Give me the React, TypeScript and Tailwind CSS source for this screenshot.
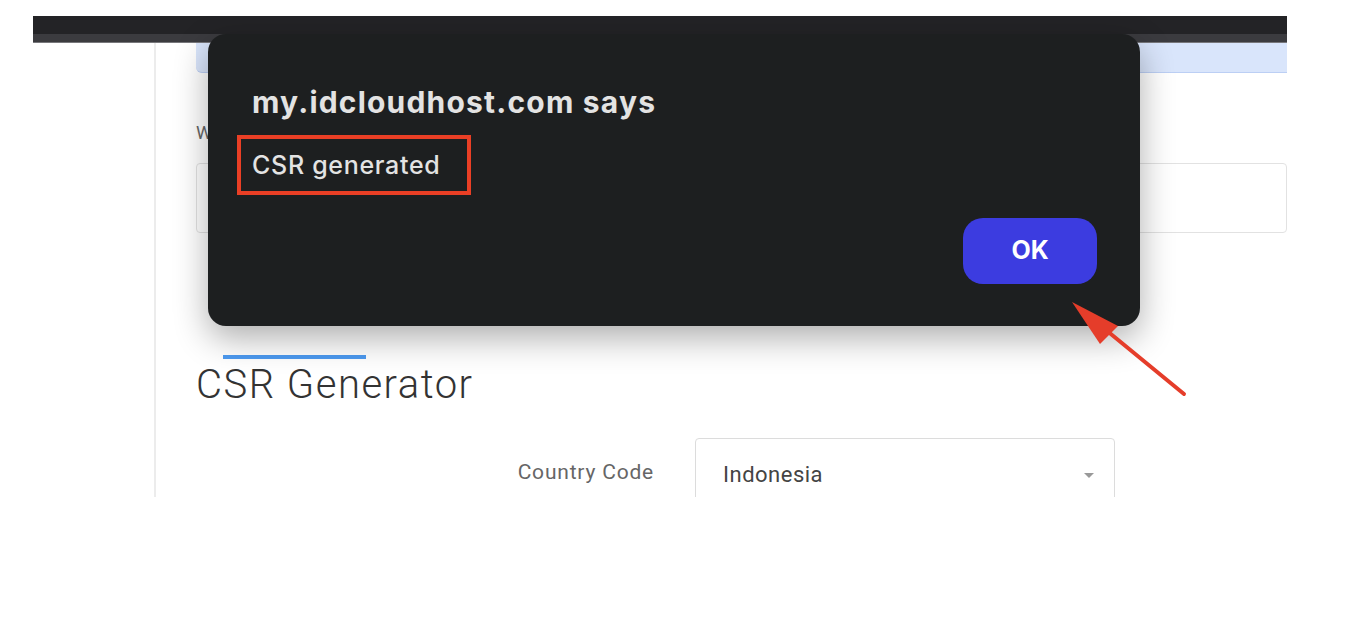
import React from "react";

export default function App() {
  return (
    <div className="w-[1348px] h-[620px] bg-white relative overflow-hidden" style={{ fontFamily: "Roboto, sans-serif" }}>
      <div className="ml-[33px] mt-[16px] w-[1254px] h-[481px] overflow-hidden flex flex-col bg-white">
        {/* browser top bar */}
        <div className="shrink-0 h-[18px] bg-[#232326]" />
        <div className="shrink-0 h-[9px] bg-[#3b3b3f] border-b border-[#77777b]" />
        <div className="flex flex-1 shrink-0">
          <div className="w-[121px] bg-white" />
          <div className="w-[2px] bg-[#ececec]" />
          <div className="flex-1 pl-[40px]">
            <div className="h-[30px] bg-[#d9e5fb] border-b border-[#bccff4] rounded-bl-[6px]" />
            <div className="mt-[50px] text-[18px] text-[#666] leading-[20px]">Website</div>
            <div className="mt-[20px] h-[70px] border border-[#e2e2e2] rounded-[4px]" />
            <div className="mt-[122px] ml-[27px] w-[143px] h-[4px] bg-[#4d9af0]" />
            <div className="mt-[4px] text-[40px] font-light text-[#333] leading-[44px] tracking-[1.5px]">CSR Generator</div>
            <div className="mt-[31px] flex items-start">
              <div className="w-[499px] pr-[41px] pt-[21px] text-right text-[21px] text-[#666] leading-[26px] tracking-[0.8px]">Country Code</div>
              <div className="w-[420px] h-[70px] border border-[#dcdcdc] rounded-[4px] flex items-center justify-between pl-[27px] pr-[20px] pb-[6px] pt-[10px]">
                <span className="text-[22px] text-[#444] leading-[26px] tracking-[0.5px]">Indonesia</span>
                <span className="w-0 h-0 border-l-[5px] border-r-[5px] border-t-[5px] border-l-transparent border-r-transparent border-t-[#999]" />
              </div>
            </div>
          </div>
        </div>
      </div>

      {/* dialog */}
      <div
        className="absolute left-[208px] top-[34px] w-[932px] h-[292px] bg-[#1d1f20] rounded-[18px] shadow-[0_12px_34px_rgba(0,0,0,0.32)] flex flex-col"
        style={{ fontFamily: "Inter, 'Noto Sans', sans-serif" }}
      >
        <div className="pl-[44px] pt-[49px] text-[30px] font-bold text-[#e3e3e3] leading-[38px] tracking-[1.2px]">my.idcloudhost.com says</div>
        <div className="ml-[29px] mt-[14px] w-[234px] h-[60px] border-[4px] border-[#ea3f25] flex items-center pl-[11px]">
          <span className="text-[25px] font-medium text-[#e3e3e3] leading-[30px] tracking-[0.7px]">CSR generated</span>
        </div>
        <div className="flex justify-end pr-[43px] mt-[23px]">
          <div className="w-[134px] h-[66px] bg-[#3c3ce0] rounded-[20px] flex items-center justify-center text-[25px] font-bold text-white">OK</div>
        </div>
      </div>

      {/* arrow */}
      <svg className="absolute left-0 top-0" width="1348" height="620" viewBox="0 0 1348 620">
        <line x1="1184" y1="394" x2="1095" y2="321" stroke="#e53d2a" strokeWidth="4" strokeLinecap="round" />
        <polygon points="1072,302 1118,326 1100,344" fill="#e53d2a" />
      </svg>
    </div>
  );
}
